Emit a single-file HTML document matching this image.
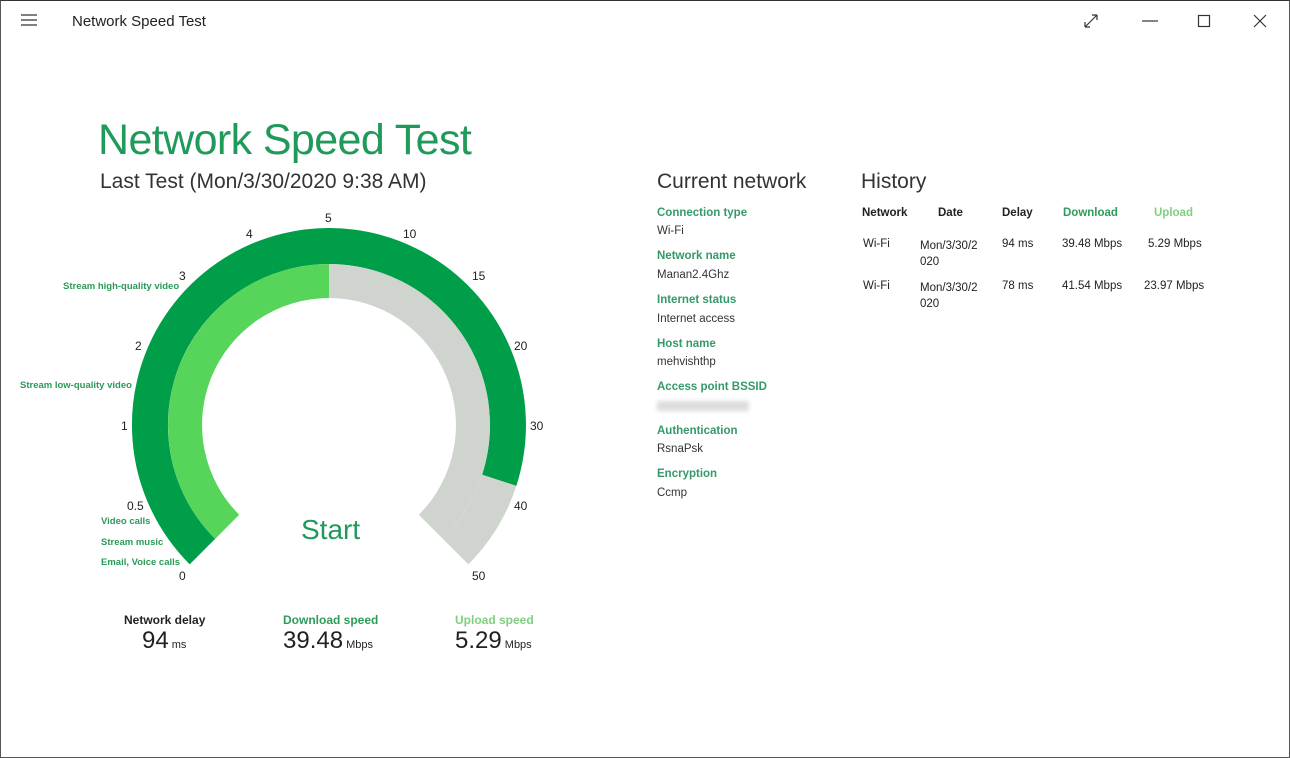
<!DOCTYPE html>
<html><head><meta charset="utf-8"><style>
*{margin:0;padding:0;box-sizing:border-box}
body{width:1290px;height:758px;background:#fff;font-family:"Liberation Sans",sans-serif;position:relative;overflow:hidden;color:#222}
.frame{position:absolute;left:0;top:0;width:1290px;height:758px;border:1px solid #555;border-top:1px solid #333}
.a{position:absolute;white-space:nowrap}
.lbl{font-size:11.5px;font-weight:bold;color:#35996a}
.val{font-size:11.5px;color:#333}
.sm{font-size:9.5px;font-weight:bold;color:#2a9a5a}
.tk{font-size:12px;color:#222}
.h{font-size:11.5px;color:#222}
</style></head><body>
<div class="frame"></div>
<svg class="a" style="left:20px;top:13px" width="18" height="14"><path d="M1 2H17M1 7H17M1 12H17" stroke="#333" stroke-width="1.3"/></svg>
<div class="a" style="left:72px;top:13px;font-size:15px;color:#222">Network Speed Test</div>
<svg class="a" style="left:1080px;top:10px" width="200" height="22">
<path d="M5 17L17 5M5 17V12M5 17H10M17 5H12M17 5V10" stroke="#333" stroke-width="1.2" fill="none"/>
<path d="M62 11H78" stroke="#333" stroke-width="1.2"/>
<rect x="118.5" y="5.5" width="11" height="11" stroke="#333" stroke-width="1.2" fill="none"/>
<path d="M174 5L186 17M186 5L174 17" stroke="#333" stroke-width="1.2"/>
</svg>
<div class="a" style="left:98px;top:116px;font-size:43px;letter-spacing:-0.6px;color:#1f9a5a">Network Speed Test</div>
<div class="a" style="left:100px;top:170px;font-size:21px;color:#333">Last Test (Mon/3/30/2020 9:38 AM)</div>
<svg class="a" style="left:0;top:0" width="660" height="600">
<path d="M202.4 551.6 A179 179 0 1 1 499.2 480.3" stroke="#009e48" stroke-width="36" fill="none"/>
<path d="M499.2 480.3 A179 179 0 0 1 455.6 551.6" stroke="#cfd4cf" stroke-width="36" fill="none"/>
<path d="M227.2 526.8 A144 144 0 0 1 329 281" stroke="#56d55a" stroke-width="34" fill="none"/>
<path d="M329 281 A144 144 0 0 1 430.8 526.8" stroke="#cfd4cf" stroke-width="34" fill="none"/>
</svg>
<div class="a" style="left:301px;top:514px;font-size:28px;color:#1f9a5a">Start</div>
<div class="a tk" style="left:325px;top:211px">5</div>
<div class="a tk" style="left:246px;top:227px">4</div>
<div class="a tk" style="left:403px;top:227px">10</div>
<div class="a tk" style="left:179px;top:269px">3</div>
<div class="a tk" style="left:472px;top:269px">15</div>
<div class="a tk" style="left:135px;top:339px">2</div>
<div class="a tk" style="left:514px;top:339px">20</div>
<div class="a tk" style="left:121px;top:419px">1</div>
<div class="a tk" style="left:530px;top:419px">30</div>
<div class="a tk" style="left:127px;top:499px">0.5</div>
<div class="a tk" style="left:514px;top:499px">40</div>
<div class="a tk" style="left:179px;top:569px">0</div>
<div class="a tk" style="left:472px;top:569px">50</div>
<div class="a sm" style="left:63px;top:281px">Stream high-quality video</div>
<div class="a sm" style="left:20px;top:380px">Stream low-quality video</div>
<div class="a sm" style="left:101px;top:516px">Video calls</div>
<div class="a sm" style="left:101px;top:537px">Stream music</div>
<div class="a sm" style="left:101px;top:557px">Email, Voice calls</div>
<div class="a" style="left:124px;top:613px;font-size:12px;font-weight:bold;color:#222">Network delay</div>
<div class="a" style="left:142px;top:627px;font-size:24px;color:#222">94<span style="font-size:11px"> ms</span></div>
<div class="a" style="left:283px;top:613px;font-size:12px;font-weight:bold;color:#2f9b5a">Download speed</div>
<div class="a" style="left:283px;top:627px;font-size:24px;color:#222">39.48<span style="font-size:11px"> Mbps</span></div>
<div class="a" style="left:455px;top:613px;font-size:12px;font-weight:bold;color:#7fcf7f">Upload speed</div>
<div class="a" style="left:455px;top:627px;font-size:24px;color:#222">5.29<span style="font-size:11px"> Mbps</span></div>
<div class="a" style="left:657px;top:170px;font-size:21px;color:#333">Current network</div>
<div class="a lbl" style="left:657px;top:207px">Connection type</div>
<div class="a val" style="left:657px;top:225px">Wi-Fi</div>
<div class="a lbl" style="left:657px;top:250px">Network name</div>
<div class="a val" style="left:657px;top:269px">Manan2.4Ghz</div>
<div class="a lbl" style="left:657px;top:294px">Internet status</div>
<div class="a val" style="left:657px;top:313px">Internet access</div>
<div class="a lbl" style="left:657px;top:338px">Host name</div>
<div class="a val" style="left:657px;top:356px">mehvishthp</div>
<div class="a lbl" style="left:657px;top:381px">Access point BSSID</div>
<div class="a" style="left:657px;top:401px;width:92px;height:10px;background:#ddd;filter:blur(2px)"></div>
<div class="a lbl" style="left:657px;top:425px">Authentication</div>
<div class="a val" style="left:657px;top:443px">RsnaPsk</div>
<div class="a lbl" style="left:657px;top:468px">Encryption</div>
<div class="a val" style="left:657px;top:487px">Ccmp</div>
<div class="a" style="left:861px;top:170px;font-size:21px;color:#333">History</div>
<div class="a h" style="left:862px;top:207px;font-weight:bold">Network</div>
<div class="a h" style="left:938px;top:207px;font-weight:bold">Date</div>
<div class="a h" style="left:1002px;top:207px;font-weight:bold">Delay</div>
<div class="a h" style="left:1063px;top:207px;font-weight:bold;color:#2f9b5a">Download</div>
<div class="a h" style="left:1154px;top:207px;font-weight:bold;color:#7fcf7f">Upload</div>
<div class="a h" style="left:863px;top:238px">Wi-Fi</div>
<div class="a h" style="left:920px;top:238px;line-height:16px">Mon/3/30/2<br>020</div>
<div class="a h" style="left:1002px;top:238px">94 ms</div>
<div class="a h" style="left:1062px;top:238px">39.48 Mbps</div>
<div class="a h" style="left:1148px;top:238px">5.29 Mbps</div>
<div class="a h" style="left:863px;top:280px">Wi-Fi</div>
<div class="a h" style="left:920px;top:280px;line-height:16px">Mon/3/30/2<br>020</div>
<div class="a h" style="left:1002px;top:280px">78 ms</div>
<div class="a h" style="left:1062px;top:280px">41.54 Mbps</div>
<div class="a h" style="left:1144px;top:280px">23.97 Mbps</div>
</body></html>
